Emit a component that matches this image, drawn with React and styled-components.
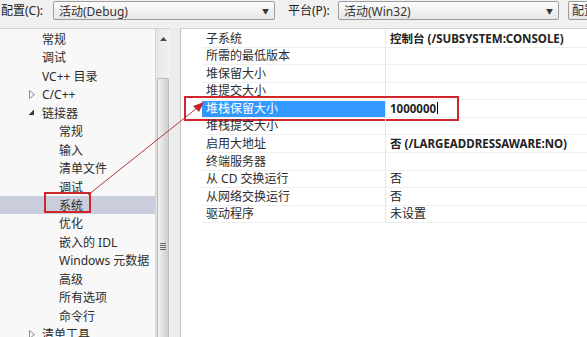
import React from 'react';
import styled, { createGlobalStyle } from 'styled-components';

const GlobalStyle = createGlobalStyle`
  html, body {
    margin: 0;
    padding: 0;
    overflow: hidden;
    background: #f0f0f0;
  }
  body {
    font-family: "Noto Sans", "Noto Sans CJK SC", sans-serif;
    font-size: 12px;
    color: #2a2a2a;
  }
`;

const treeItems = [
  { text: '常规', level: 0 },
  { text: '调试', level: 0 },
  { text: 'VC++ 目录', level: 0 },
  { text: 'C/C++', level: 0, expander: 'closed' },
  { text: '链接器', level: 0, expander: 'open' },
  { text: '常规', level: 1 },
  { text: '输入', level: 1 },
  { text: '清单文件', level: 1 },
  { text: '调试', level: 1 },
  { text: '系统', level: 1, selected: true },
  { text: '优化', level: 1 },
  { text: '嵌入的 IDL', level: 1 },
  { text: 'Windows 元数据', level: 1 },
  { text: '高级', level: 1 },
  { text: '所有选项', level: 1 },
  { text: '命令行', level: 1 },
  { text: '清单工具', level: 0, expander: 'closed' },
];

const properties = [
  { name: '子系统', value: '控制台 (/SUBSYSTEM:CONSOLE)', bold: true },
  { name: '所需的最低版本', value: '' },
  { name: '堆保留大小', value: '' },
  { name: '堆提交大小', value: '' },
  { name: '堆栈保留大小', value: '1000000', bold: true, selected: true },
  { name: '堆栈提交大小', value: '' },
  { name: '启用大地址', value: '否 (/LARGEADDRESSAWARE:NO)', bold: true },
  { name: '终端服务器', value: '' },
  { name: '从 CD 交换运行', value: '否' },
  { name: '从网络交换运行', value: '否' },
  { name: '驱动程序', value: '未设置' },
];

function Expander({ open }) {
  if (open) {
    return (
      <svg width="7" height="7" viewBox="0 0 7 7">
        <polygon points="6,0.5 6,6 0.5,6" fill="#3a3a3a" />
      </svg>
    );
  }
  return (
    <svg width="6" height="9" viewBox="0 0 6 9">
      <polygon points="0.5,0.5 5.5,4.5 0.5,8.5" fill="none" stroke="#8a8a8a" strokeWidth="1" />
    </svg>
  );
}

export default function App() {
  return (
    <Page>
      <GlobalStyle />
      <TopBar>
        <Label width={53}>配置(C):</Label>
        <Combo width={222}>
          <span>活动(Debug)</span>
          <ComboArrow>▼</ComboArrow>
        </Combo>
        <Label width={51}>平台(P):</Label>
        <Combo width={221}>
          <span>活动(Win32)</span>
          <ComboArrow>▼</ComboArrow>
        </Combo>
        <ManagerButton>配置管理器(O)...</ManagerButton>
      </TopBar>

      <Main>
        <TreePanel>
          {treeItems.map((item, idx) => (
            <TreeRow key={idx} selected={item.selected}>
              <ExpanderSlot level={item.level}>
                {item.expander && <Expander open={item.expander === 'open'} />}
              </ExpanderSlot>
              <TreeText marked={item.selected}>{item.text}</TreeText>
            </TreeRow>
          ))}
        </TreePanel>

        <ScrollBar>
          <ScrollArrow>
            <svg width="7" height="4" viewBox="0 0 7 4">
              <polygon points="0,4 3.5,0 7,4" fill="#4a4a4a" />
            </svg>
          </ScrollArrow>
          <ScrollThumb>
            <Grip />
          </ScrollThumb>
        </ScrollBar>

        <Splitter />

        <PropertyPanel>
          {properties.map((p, idx) => (
            <PropRow key={idx} marked={p.selected}>
              <PropName selected={p.selected}>{p.name}</PropName>
              <PropValue bold={p.bold}>
                {p.value}
                {p.selected && <Caret />}
              </PropValue>
            </PropRow>
          ))}
        </PropertyPanel>
      </Main>

      <Arrow width="587" height="337" viewBox="0 0 587 337">
        <line x1="88" y1="195" x2="197" y2="108" stroke="#b8343a" strokeWidth="1" />
        <polygon points="204,102 193,106 199,112" fill="#c0282e" />
      </Arrow>
    </Page>
  );
}

const Page = styled.div`
  position: relative;
  width: 587px;
  height: 337px;
  overflow: hidden;
  display: flex;
  flex-direction: column;
  background: #f0f0f0;
`;

const TopBar = styled.div`
  height: 28px;
  display: flex;
  align-items: flex-start;
  padding-top: 1px;
  box-sizing: border-box;
  flex-shrink: 0;
`;

const Label = styled.div`
  width: ${(props) => props.width}px;
  flex-shrink: 0;
  height: 19px;
  line-height: 19px;
  padding-left: 1px;
  box-sizing: border-box;
  color: #222;
  white-space: nowrap;
`;

const Combo = styled.div`
  width: ${(props) => props.width}px;
  flex-shrink: 0;
  height: 19px;
  box-sizing: border-box;
  border: 1px solid #9c9c9c;
  border-radius: 2px;
  background: linear-gradient(#fbfbfb, #e7e7e7);
  display: flex;
  align-items: center;
  justify-content: space-between;
  padding: 0 5px 0 5px;
  margin-right: 12px;
  color: #333;
  white-space: nowrap;
`;

const ComboArrow = styled.span`
  font-size: 7px;
  color: #333;
`;

const ManagerButton = styled.div`
  margin-left: -3px;
  height: 19px;
  line-height: 17px;
  box-sizing: border-box;
  border: 1px solid #9c9c9c;
  border-radius: 2px;
  background: linear-gradient(#fbfbfb, #e4e4e4);
  padding: 0 8px 0 3px;
  white-space: nowrap;
  color: #333;
`;

const Main = styled.div`
  flex: 1;
  display: flex;
  min-height: 0;
`;

const TreePanel = styled.div`
  width: 155px;
  flex-shrink: 0;
  background: #f8f8f8;
  border-top: 1px solid #d0d0d0;
  box-sizing: border-box;
  padding-top: 0.8px;
`;

const TreeRow = styled.div`
  height: 18.45px;
  display: flex;
  align-items: center;
  background: ${(props) => (props.selected ? '#cacddb' : 'transparent')};
`;

const ExpanderSlot = styled.div`
  width: ${(props) => (props.level === 0 ? 42 : 59)}px;
  flex-shrink: 0;
  display: flex;
  justify-content: flex-end;
  align-items: center;
  padding-right: ${(props) => (props.level === 0 ? 7 : 0)}px;
  box-sizing: border-box;
`;

const TreeText = styled.span`
  position: relative;
  white-space: nowrap;
  color: #2c2c2c;

  ${(props) =>
    props.marked &&
    `
    &::after {
      content: '';
      position: absolute;
      left: -15px;
      top: -4px;
      width: 47px;
      height: 21px;
      border: 2px solid #d0262c;
      box-sizing: border-box;
    }
  `}
`;

const ScrollBar = styled.div`
  width: 15px;
  flex-shrink: 0;
  box-sizing: border-box;
  border-left: 1px solid #d4d4d4;
  border-top: 1px solid #d0d0d0;
  background: linear-gradient(to right, #e6e6e6, #f2f2f2);
  display: flex;
  flex-direction: column;
  align-items: center;
`;

const ScrollArrow = styled.div`
  height: 20px;
  display: flex;
  align-items: center;
  justify-content: center;
`;

const ScrollThumb = styled.div`
  margin-top: 29px;
  width: 12px;
  flex: 1;
  box-sizing: border-box;
  border: 1px solid #b8b8b8;
  border-bottom: none;
  border-radius: 2px 2px 0 0;
  background: linear-gradient(to right, #f4f4f4, #dcdcdc 60%, #d0d0d0);
  display: flex;
  justify-content: center;
  padding-top: 164px;
`;

const Grip = styled.div`
  width: 6px;
  height: 7px;
  background: repeating-linear-gradient(#6a6a6a 0 1px, transparent 1px 2px);
`;

const Splitter = styled.div`
  width: 11px;
  flex-shrink: 0;
  background: #ececec;
  border-right: 1px solid #c4c4c4;
  box-sizing: border-box;
`;

const PropertyPanel = styled.div`
  flex: 1;
  background: #fff;
  border-top: 1px solid #d0d0d0;
  padding-top: 0.5px;
  padding-left: 21px;
  box-sizing: border-box;
`;

const PropRow = styled.div`
  position: relative;
  height: 17.6px;
  display: grid;
  grid-template-columns: 184px 1fr;

  ${(props) =>
    props.marked &&
    `
    &::after {
      content: '';
      position: absolute;
      left: -18px;
      top: -4px;
      width: 275px;
      height: 25px;
      border: 2px solid #d0262c;
      box-sizing: border-box;
      pointer-events: none;
    }
  `}
`;

const PropName = styled.div`
  box-sizing: border-box;
  padding-left: 4px;
  line-height: 16px;
  border-bottom: 1px solid #efefef;
  border-right: 1px solid #e6e6e6;
  white-space: nowrap;
  background: ${(props) => (props.selected ? '#3399ff' : 'transparent')};
  color: ${(props) => (props.selected ? '#fff' : '#2c2c2c')};
  background-clip: content-box;
  padding-top: 1px;
  ${(props) => props.selected && 'padding-left: 0; text-indent: 4px;'}
`;

const PropValue = styled.div`
  box-sizing: border-box;
  padding-left: 4px;
  line-height: 17px;
  border-bottom: 1px solid #efefef;
  white-space: nowrap;
  font-size: ${(props) => (props.bold ? '11.5px' : '12px')};
  font-weight: ${(props) => (props.bold ? 700 : 400)};
  color: #222;
  display: flex;
  align-items: center;
`;

const Caret = styled.span`
  display: inline-block;
  width: 1px;
  height: 12px;
  background: #000;
  margin-left: 1px;
`;

const Arrow = styled.svg`
  position: absolute;
  left: 0;
  top: 0;
  pointer-events: none;
`;
